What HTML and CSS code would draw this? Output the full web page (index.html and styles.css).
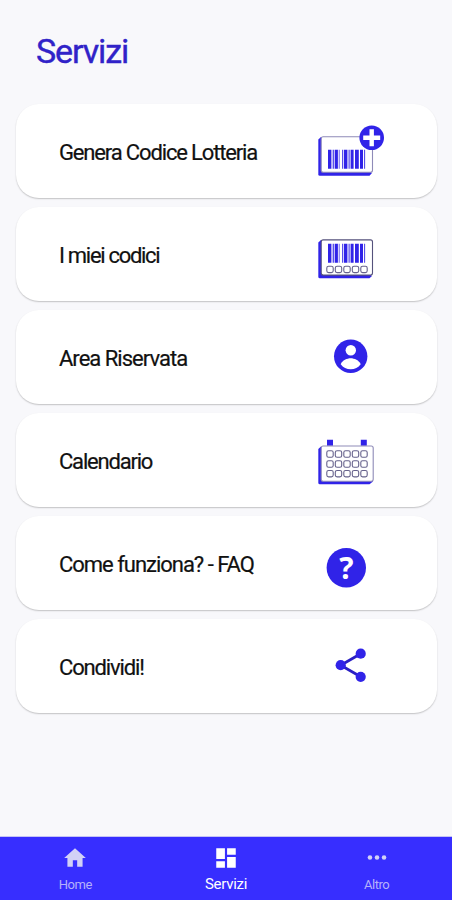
FILE: index.html
```html
<!DOCTYPE html>
<html lang="it">
<head>
    <meta charset="UTF-8">
    <meta name="viewport" content="width=device-width, initial-scale=1.0">
    <title>Servizi</title>
    <link rel="stylesheet" href="styles.css">
</head>
<body>
    <!-- shared icon parts -->
    <svg class="defs" width="0" height="0">
        <defs>
            <g id="bars">
                <path d="M0 0h3.4v19H0zM4.7 0h1.1v19H4.7zM6.7 0h3.2v19H6.7zM10.8 0h.7v19h-.7zM14.2 0h1v19h-1zM16 0h3.4v19H16zM20.6 0h1v19h-1zM22.6 0h3v19h-3zM27 0h3.8v19H27zM32 0h3v19h-3zM36.2 0h.9v19h-.9z"/>
            </g>
            <g id="cells">
                <rect x=".5" y=".5" width="6.4" height="6.4" rx="1.8"/>
                <rect x="9" y=".5" width="6.4" height="6.4" rx="1.8"/>
                <rect x="17.500" y=".5" width="6.4" height="6.4" rx="1.8"/>
                <rect x="26" y=".5" width="6.4" height="6.4" rx="1.8"/>
                <rect x="34.500" y=".5" width="6.4" height="6.4" rx="1.8"/>
            </g>
        </defs>
    </svg>
    <div class="page">
        <h1 class="title">Servizi</h1>
        <ul class="list">
            <li class="card">
                <span class="label label-genera">Genera Codice Lotteria</span>
                <svg class="icon" viewBox="0 0 80 94">
                    <path class="fill" d="M15 33L12.300 35.500v34.700q0 1.500 1.500 1.500H63.500L66 69z"/>
                    <rect class="front" x="15.200" y="32.700" width="51.300" height="35.500" rx="2"/>
                    <use class="fill" href="#bars" transform="translate(22 45.700)"/>
                    <circle class="fill" cx="65.700" cy="33.700" r="12.300"/>
                    <path class="plus" d="M65.700 25.200v17M57.200 33.700h17"/>
                </svg>
            </li>
            <li class="card">
                <span class="label label-codici">I miei codici</span>
                <svg class="icon" viewBox="0 0 80 94">
                    <path class="fill" d="M15 33L12.300 35.500v34.300q0 1.500 1.500 1.500H63.500L66 69z"/>
                    <rect class="front dark" x="15.200" y="32.900" width="51.300" height="35.200" rx="2"/>
                    <use class="fill" href="#bars" transform="translate(22 36.700)"/>
                    <use class="cell" href="#cells" transform="translate(20.300 58.700)"/>
                </svg>
            </li>
            <li class="card">
                <span class="label label-area">Area Riservata</span>
                <svg class="icon" viewBox="0 0 80 94">
                    <circle class="fill" cx="44.700" cy="46.300" r="16.700"/>
                    <circle class="hole" cx="44.800" cy="40.200" r="5.200"/>
                    <path class="hole" d="M34.700 54.300c1.500-4 6.500-6 10-6s8.500 2 10 6c-2.300 3.300-6 5-10 5s-7.700-1.700-10-5z"/>
                </svg>
            </li>
            <li class="card">
                <span class="label label-calendario">Calendario</span>
                <svg class="icon" viewBox="0 0 80 94">
                    <path class="fill" d="M15 33.500L12.300 36v33.800q0 1.500 1.500 1.500H63.500L67 68.500z"/>
                    <path class="fill" d="M21 26.700h6v6h-6zM54.800 26.700h6v6h-6z"/>
                    <rect class="front" x="15.200" y="33" width="52" height="35.200" rx="2"/>
                    <use class="cell" href="#cells" transform="translate(20.300 37.300)"/>
                    <use class="cell" href="#cells" transform="translate(20.300 47.300)"/>
                    <use class="cell" href="#cells" transform="translate(20.300 57)"/>
                </svg>
            </li>
            <li class="card">
                <span class="label label-faq">Come funziona? - FAQ</span>
                <svg class="icon" viewBox="0 0 80 94">
                    <circle class="fill" cx="40.300" cy="51.700" r="19.700"/>
                    <text class="question" x="40.300" y="63">?</text>
                </svg>
            </li>
            <li class="card">
                <span class="label label-condividi">Condividi!</span>
                <svg class="icon" viewBox="0 0 80 94">
                    <path class="share" d="M54.700 34.700L34.700 46.200L54.700 57.800"/>
                    <circle class="fill" cx="54.700" cy="34.700" r="5.100"/>
                    <circle class="fill" cx="34.700" cy="46.200" r="5.100"/>
                    <circle class="fill" cx="54.700" cy="57.800" r="5.100"/>
                </svg>
            </li>
        </ul>
        <nav class="tabbar">
            <a class="tab" href="#">
                <svg class="tab-icon" viewBox="0 0 24 24"><path d="M10 20v-6h4v6h5v-8h3L12 3 2 12h3v8z"/></svg>
                <span class="tab-text">Home</span>
            </a>
            <a class="tab current" href="#">
                <svg class="tab-icon" viewBox="0 0 24 24"><path d="M3 13h8V3H3v10zm0 8h8v-6H3v6zm10 0h8V11h-8v10zm0-18v6h8V3h-8z"/></svg>
                <span class="tab-text">Servizi</span>
            </a>
            <a class="tab" href="#">
                <svg class="tab-icon dots" viewBox="0 0 24 24"><circle cx="5.500" cy="11.500" r="2.100"/><circle cx="12" cy="11.500" r="2.100"/><circle cx="18.500" cy="11.500" r="2.100"/></svg>
                <span class="tab-text text-altro">Altro</span>
            </a>
        </nav>
    </div>
</body>
</html>
```
FILE: styles.css
```css
* {
    margin: 0;
    padding: 0;
    box-sizing: border-box;
}
body {
    background: #f8f8fb;
    font-family: Roboto, "Liberation Sans", sans-serif;
}
ul {
    list-style: none;
}
.defs {
    display: block;
}
.page {
    height: 900px;
    display: flex;
    flex-direction: column;
}
.title {
    height: 104px;
    padding: 31px 0 0 36px;
    font-size: 34px;
    line-height: 40px;
    font-weight: 400;
    letter-spacing: -1.1px;
    color: #3022c8;
    -webkit-text-stroke: 0.4px #3022c8;
}
/* cards */
.list {
    flex: 1;
    padding: 0 15px 0 16px;
    display: flex;
    flex-direction: column;
    gap: 9px;
}
.card {
    height: 94px;
    padding: 0 51px 0 43px;
    display: flex;
    align-items: center;
    justify-content: space-between;
    background: #fff;
    border-radius: 23px;
    box-shadow: 0 1px 1.5px rgba(0, 0, 0, 0.22);
}
.label {
    font-size: 22px;
    line-height: 28px;
    padding-top: 3px;
    color: #111;
    white-space: nowrap;
    -webkit-text-stroke: 0.2px #111;
}
/* tighter tracking per label */
.label-genera {
    letter-spacing: -1.15px;
}
.label-codici {
    letter-spacing: -1.3px;
}
.label-area {
    letter-spacing: -0.98px;
}
.label-calendario {
    letter-spacing: -1.2px;
}
.label-faq {
    letter-spacing: -1.02px;
}
.label-condividi {
    letter-spacing: -1.15px;
}
.icon {
    width: 80px;
    height: 94px;
    flex: none;
}
.fill {
    fill: #3023e8;
}
.hole {
    fill: #fff;
}
.front {
    fill: #fff;
    stroke: #8f8bb8;
    stroke-width: 1.1;
}
.dark {
    stroke: #55527c;
}
.plus {
    stroke: #fff;
    stroke-width: 4.4;
}
.cell {
    fill: none;
    stroke: #66628c;
    stroke-width: 1.1;
}
.share {
    fill: none;
    stroke: #2a1fc4;
    stroke-width: 2.8;
}
.question {
    fill: #fff;
    font: bold 30px "Open Sans", sans-serif;
    text-anchor: middle;
}
/* bottom navigation */
.tabbar {
    height: 64px;
    display: grid;
    grid-template-columns: 1fr 1fr 1fr;
    background: #372eff;
    border-top: 1px solid #c5c4f5;
}
.tab {
    display: flex;
    flex-direction: column;
    align-items: center;
    padding-top: 8px;
    color: #b5b1fa;
    text-decoration: none;
}
.tab-icon {
    width: 26px;
    height: 26px;
    fill: #d2d1f6;
}
.tab-text {
    margin-top: 5px;
    font-size: 13px;
    line-height: 18px;
    letter-spacing: -0.5px;
}
.current .tab-icon {
    fill: #fff;
}
.current .tab-text {
    margin-top: 4px;
    font-size: 15px;
    letter-spacing: -0.3px;
    color: #fff;
}
```
